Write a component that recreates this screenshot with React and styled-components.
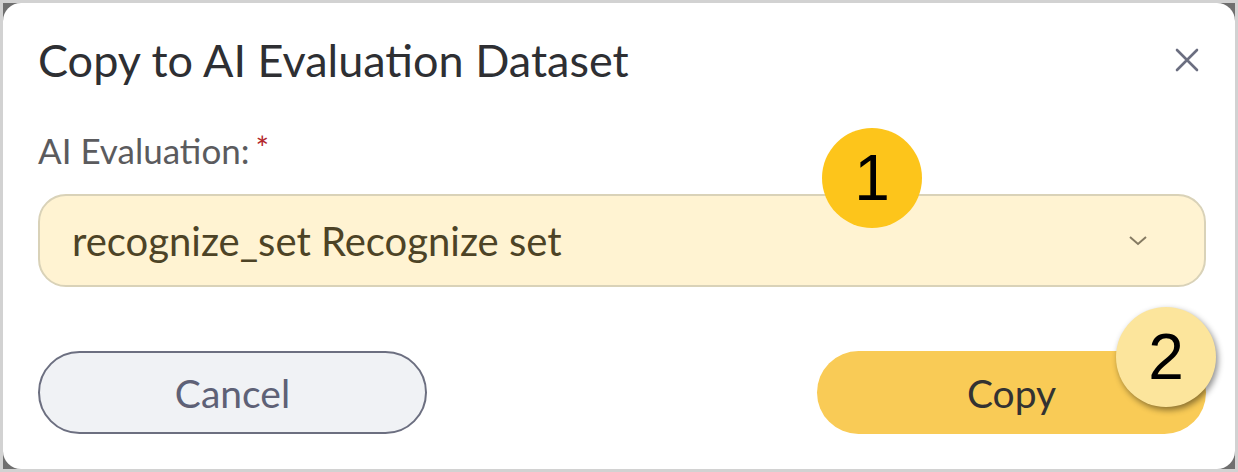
import React from 'react'
import styled, { createGlobalStyle } from 'styled-components'

const GlobalStyle = createGlobalStyle`
  html, body {
    margin: 0;
    padding: 0;
    background: #6f6f6f;
  }
  * {
    box-sizing: border-box;
  }
`

const Frame = styled.div`
  width: 1238px;
  height: 472px;
  border: 3px solid #d2d2d2;
  background: #6f6f6f;
`

const Dialog = styled.div`
  position: relative;
  height: 100%;
  background: #fff;
  border-radius: 18px;
  padding: 32px 29px 0 35px;
  font-family: Lato, 'Noto Sans', sans-serif;
`

const Header = styled.div`
  display: flex;
  align-items: center;
  justify-content: space-between;
  height: 50px;
`

const Title = styled.h1`
  margin: 0;
  font-size: 45px;
  line-height: 50px;
  font-weight: 400;
  color: #2e2f33;
`

const CloseButton = styled.button`
  border: 0;
  background: none;
  padding: 0;
  margin-right: 5px;
  width: 28px;
  height: 28px;
  display: grid;
  place-items: center;
  cursor: pointer;
`

const Field = styled.div`
  margin-top: 46px;
  display: flex;
  flex-direction: column;
  gap: 27px;
`

const Label = styled.label`
  font-size: 35px;
  color: #5b5b5e;
  line-height: 34px;
`

const Required = styled.span`
  color: #b3262b;
  margin-left: 6px;
  font-size: 32px;
  vertical-align: 4px;
`

const Select = styled.div`
  height: 93px;
  border: 2px solid #d9d2b8;
  border-radius: 28px;
  background: #fff3d2;
  display: flex;
  align-items: center;
  justify-content: space-between;
  padding: 0 56px 0 32px;
  font-size: 40px;
  color: #4d4326;
`

const Actions = styled.div`
  margin-top: 64px;
  display: flex;
  justify-content: space-between;
`

const Button = styled.button`
  width: 389px;
  height: 83px;
  border-radius: 42px;
  font-family: Lato, 'Noto Sans', sans-serif;
  font-size: 39px;
  border: ${(p) => (p.$primary ? '0' : '2px solid #6c6f80')};
  background: ${(p) => (p.$primary ? '#f9cb56' : '#f0f2f5')};
  color: ${(p) => (p.$primary ? '#333232' : '#5e6176')};
  cursor: pointer;
`

const Badge = styled.div`
  position: absolute;
  width: 100px;
  height: 100px;
  border-radius: 50%;
  display: grid;
  place-items: center;
  font-family: 'Liberation Sans', Arial, sans-serif;
  font-size: 64px;
  line-height: 1;
  color: #000;
  left: ${(p) => p.$x}px;
  top: ${(p) => p.$y}px;
  background: ${(p) => p.$bg};
  box-shadow: ${(p) => (p.$shadow ? '2px 3px 6px rgba(0,0,0,0.45)' : 'none')};
`

const Close = () => (
  <svg width="24" height="24" viewBox="0 0 24 24">
    <path d="M2 2 L22 22 M22 2 L2 22" stroke="#6b6e80" strokeWidth="2.6" strokeLinecap="round" />
  </svg>
)

const Chevron = () => (
  <svg width="20" height="12" viewBox="0 0 20 12">
    <path d="M2 2 L10 9 L18 2" fill="none" stroke="#857a62" strokeWidth="2" />
  </svg>
)

const App = () => {
  return (
    <>
      <GlobalStyle />
      <Frame>
        <Dialog>
          <Header>
            <Title>Copy to AI Evaluation Dataset</Title>
            <CloseButton aria-label='close'>
              <Close />
            </CloseButton>
          </Header>
          <Field>
            <Label>
              AI Evaluation:<Required>*</Required>
            </Label>
            <Select>
              <span>recognize_set Recognize set</span>
              <Chevron />
            </Select>
          </Field>
          <Actions>
            <Button>Cancel</Button>
            <Button $primary>Copy</Button>
          </Actions>
          <Badge $x={819} $y={125} $bg='#fdc51b'>1</Badge>
          <Badge $x={1113} $y={304} $bg='#fce59c' $shadow>2</Badge>
        </Dialog>
      </Frame>
    </>
  )
}

export default App
